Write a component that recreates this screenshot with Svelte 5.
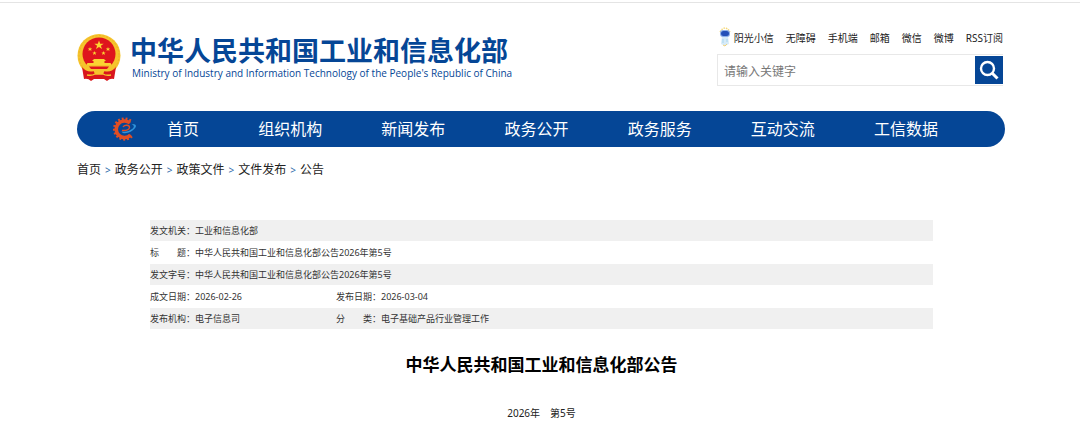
<script>
  const tools = ['无障碍', '手机端', '邮箱', '微信', '微博', 'RSS订阅'];
  const nav = ['首页', '组织机构', '新闻发布', '政务公开', '政务服务', '互动交流', '工信数据'];
  const crumbs = ['首页', '政务公开', '政策文件', '文件发布', '公告'];
  const teeth = Array.from({ length: 13 }, (_, i) => 50 + i * 21);
  const rows = [
    [['发文机关', '工业和信息化部']],
    [['标　　题', '中华人民共和国工业和信息化部公告2026年第5号']],
    [['发文字号', '中华人民共和国工业和信息化部公告2026年第5号']],
    [['成文日期', '2026-02-26'], ['发布日期', '2026-03-04']],
    [['发布机构', '电子信息司'], ['分　　类', '电子基础产品行业管理工作']]
  ];
  let query = $state('');
</script>

<div class="page">
  <header>
    <a class="brand" href="#home">
      <svg class="emblem" viewBox="0 0 44 48" aria-hidden="true">
        <circle cx="22" cy="21.5" r="21.5" fill="#f6c52c" />
        <circle cx="22" cy="21.5" r="20" fill="none" stroke="#eeb02a" stroke-width="1" stroke-dasharray="2 1.6" />
        <path d="M5 33Q10 39 17 37h10Q34 39 39 33L37 45Q33 44 30 47L27 45H17L14 47Q11 44 7 45Z" fill="#d9161c" />
        <circle cx="22" cy="20" r="16.5" fill="#df151d" />
        <path d="M22 6.5l1.2 3.2h3.5l-2.8 2.1 1.1 3.3-3-2-3 2 1.1-3.3-2.8-2.1h3.5z" fill="#fbd432" />
        <g fill="#fbd432">
          <path d="M13 13l.6 1.5h1.6l-1.2 1 .5 1.6-1.5-1-1.5 1 .5-1.6-1.2-1h1.6z" />
          <path d="M31 13l.6 1.5h1.6l-1.2 1 .5 1.6-1.5-1-1.5 1 .5-1.6-1.2-1h1.6z" />
          <path d="M17.5 17l.6 1.4h1.5l-1.2 1 .5 1.5-1.4-.9-1.4.9.5-1.5-1.2-1h1.5z" />
          <path d="M26.5 17l.6 1.4h1.5l-1.2 1 .5 1.5-1.4-.9-1.4.9.5-1.5-1.2-1h1.5z" />
          <path d="M17 25h10l2 2h-1.5v2h6l1.5 2.5H9l1.5-2.5h6v-2H15z" />
        </g>
        <path d="M7 31h30l-3 4-6 1-2 4h-8l-2-4-6-1z" fill="#f6c52c" />
        <path d="M12 32.5h20l-2 2.5H14z" fill="#df151d" />
        <path d="M10 41q5 1 8-1h8q3 2 8 1" fill="none" stroke="#f6c52c" stroke-width="1.5" />
      </svg>
      <span class="names">
        <strong>中华人民共和国工业和信息化部</strong>
        <span class="english">Ministry of Industry and Information Technology of the People's Republic of China</span>
      </span>
    </a>
    <div class="side">
      <div class="tools">
        <a href="#xiaoxin">
          <svg class="robot" viewBox="0 0 12 20" aria-hidden="true">
            <path d="M1 5Q6-3 11 5" fill="none" stroke="#f5d878" stroke-width="1.5" stroke-dasharray="1.5 1" />
            <path d="M3 9h6l1 8-4 2-4-2z" fill="#d6ebf8" />
            <rect x="1" y="3" width="10" height="7" rx="3" fill="#8fb1e8" />
            <rect x="2" y="4" width="8" height="5" rx="2.5" fill="#2450b8" />
            <path d="M4 12v4M8 12v3" stroke="#a9d5ee" />
            <path d="M4 18l2 1 2-2" fill="none" stroke="#f2d27a" />
          </svg>阳光小信</a>
        {#each tools as tool}<a href="#tool">{tool}</a>{/each}
      </div>
      <form class="search" onsubmit={(e) => e.preventDefault()}>
        <input type="text" aria-label="请输入关键字" placeholder="请输入关键字" bind:value={query} />
        <button aria-label="搜索">
          <svg viewBox="0 0 28 28" aria-hidden="true">
            <circle cx="12.5" cy="12.5" r="6.5" fill="none" stroke="#fff" stroke-width="2.4" />
            <path d="M17 17l5.5 5.5" stroke="#fff" stroke-width="3" />
          </svg>
        </button>
      </form>
    </div>
  </header>

  <nav aria-label="主导航">
    <svg class="gear" viewBox="0 0 24 24" aria-hidden="true">
      <g fill="#e04e24">
        {#each teeth as angle}
          <rect x="19.5" y="11" width="3.6" height="2" transform="rotate({angle} 11.5 12)" />
        {/each}
      </g>
      <path d="M17.5 18A8.300 8.300 0 1 1 17 6" fill="none" stroke="#e04e24" stroke-width="3.6" />
      <path d="M9 13.500q7 .5 7.500-3c0-3-5-3-6.500-.5" fill="none" stroke="#e04e24" stroke-width="1.400" />
      <path d="M18.500 7c5.500-.5 6 3 1 6.500-4 3-10 4-11 1 4 1 8-.5 10.500-2.500 2.500-2 2.500-3.500-.5-5z" fill="#2f93da" />
    </svg>
    <ul>
      {#each nav as item}<li><a href="#nav">{item}</a></li>{/each}
    </ul>
  </nav>

  <div class="crumbs">
    {#each crumbs as crumb, i}
      {#if i > 0}<span>&gt;</span>{/if}
      <a href="#crumb">{crumb}</a>
    {/each}
  </div>

  <main>
    <table>
      <colgroup>
        <col class="label" />
        <col class="first" />
        <col class="label" />
        <col />
      </colgroup>
      <tbody>
        {#each rows as row}
          <tr>
            {#each row as [label, value]}
              <th scope="row">{label}：</th>
              <td colspan={row.length === 1 ? 3 : 1}>{value}</td>
            {/each}
          </tr>
        {/each}
      </tbody>
    </table>
    <h1>中华人民共和国工业和信息化部公告</h1>
    <p>2026年　第5号</p>
  </main>
</div>

<style>
  :global(body) {
    margin: 0;
    background: #fff;
  }
  .page {
    border-top: 1px solid #e4e4e4;
    margin-top: 2px;
    padding: 0 75px 0 77px;
    font-family: 'Noto Sans', 'Noto Sans CJK SC', sans-serif;
    color: #222;
  }
  a {
    color: inherit;
    text-decoration: none;
  }
  header {
    display: flex;
    justify-content: space-between;
    align-items: flex-start;
    height: 108px;
  }
  .brand {
    display: flex;
    gap: 9px;
    padding-top: 31px;
    color: #054696;
  }
  .emblem {
    width: 44px;
    height: 48px;
  }
  .names {
    display: flex;
    flex-direction: column;
    white-space: nowrap;
  }
  strong {
    font-size: 27px;
    line-height: 34px;
    font-weight: 700;
  }
  .english {
    padding-left: 2px;
    font-family: 'Open Sans', 'Noto Sans', sans-serif;
    font-size: 10px;
    line-height: 10px;
    font-weight: 400;
  }
  .side {
    width: 286px;
    margin-right: 2px;
    padding-top: 24px;
  }
  .tools {
    display: flex;
    justify-content: flex-end;
    align-items: center;
    gap: 12px;
    height: 20px;
    font-size: 10px;
    white-space: nowrap;
  }
  .tools a {
    display: flex;
    align-items: center;
    gap: 3px;
  }
  .robot {
    width: 12px;
    height: 20px;
  }
  .search {
    display: flex;
    align-items: center;
    box-sizing: border-box;
    height: 32px;
    margin-top: 7px;
    border: 1px solid #e8e8e8;
    border-right-width: 0;
  }
  input {
    flex: 1;
    min-width: 0;
    padding: 2px 6px 0;
    border: 0;
    outline: 0;
    background: none;
    font: 12px 'Noto Sans', 'Noto Sans CJK SC', sans-serif;
  }
  input::placeholder {
    color: #777;
  }
  button {
    width: 28px;
    height: 28px;
    padding: 0;
    border: 0;
    background: #054696;
  }
  button svg {
    display: block;
  }
  nav {
    display: flex;
    align-items: center;
    height: 36px;
    border-radius: 18px;
    background: #054696;
    color: #fff;
    font-size: 16px;
  }
  .gear {
    width: 24px;
    height: 24px;
    margin-left: 36px;
  }
  ul {
    flex: 1;
    display: flex;
    justify-content: space-between;
    margin: 0;
    padding: 0 67px 0 30px;
    list-style: none;
  }
  li {
    line-height: 36px;
  }
  .crumbs {
    display: flex;
    gap: 4px;
    padding-top: 14px;
    font-size: 12px;
    line-height: 18px;
  }
  .crumbs span {
    color: #2f6cab;
    font-size: 10px;
  }
  main {
    padding: 41px 72px 0 73px;
  }
  table {
    width: 100%;
    table-layout: fixed;
    border-collapse: collapse;
    font-size: 9px;
    color: #333;
  }
  .label {
    width: 45px;
  }
  .first {
    width: 141px;
  }
  tr {
    height: 22px;
    background: linear-gradient(#fff, #fff) bottom / 100% 1px no-repeat;
  }
  tr:nth-child(odd) {
    background-color: #f0f0f0;
  }
  th,
  td {
    padding: 0;
    line-height: 20px;
    font-weight: 400;
    text-align: left;
    white-space: nowrap;
  }
  h1 {
    margin: 21px 0 0;
    font-size: 17px;
    line-height: 28px;
    text-align: center;
    color: #000;
  }
  p {
    margin: 24px 0 0;
    font-size: 10px;
    line-height: 20px;
    text-align: center;
  }
</style>
